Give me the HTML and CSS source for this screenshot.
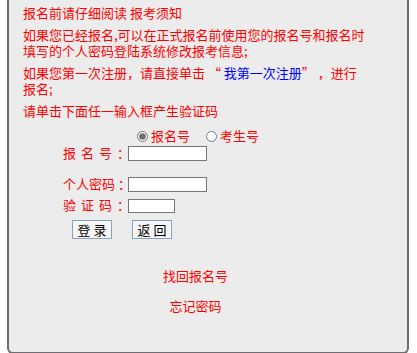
FILE: index.html
```html
<!DOCTYPE html>
<html lang="zh-CN">
<head>
  <meta charset="UTF-8" />
  <meta name="viewport" content="width=device-width, initial-scale=1.0"/>
  <title>考生登录</title>
  <link rel="stylesheet" href="styles.css">
</head>
<body>

  <div class="panel">
    <div class="content">
      <div class="notice">
        <p>报名前请仔细阅读 报考须知</p>
        <p>如果您已经报名,可以在正式报名前使用您的报名号和报名时填写的个人密码登陆系统修改报考信息;</p>
        <p>如果您第一次注册，请直接单击 “ <a href="#" class="blue">我第一次注册</a>” ，进行报名;</p>
        <p>请单击下面任一输入框产生验证码</p>
      </div>

      <form class="login" onsubmit="return false">
        <div class="radios">
          <label><input type="radio" name="kind" checked>报名号</label>
          <label><input type="radio" name="kind">考生号</label>
        </div>
        <div class="row r1">
          <span class="lbl"><span class="wide">报名号</span>：</span>
          <input type="text" class="field">
        </div>
        <div class="row r2">
          <span class="lbl">个人密码&nbsp;：</span>
          <input type="password" class="field">
        </div>
        <div class="row r3">
          <span class="lbl"><span class="wide">验证码</span>：</span>
          <input type="text" class="field short">
        </div>
        <div class="buttons">
          <button type="submit">登 录</button>
          <button type="button">返 回</button>
        </div>
      </form>

      <div class="links">
        <a href="#">找回报名号</a>
        <a href="#">忘记密码</a>
      </div>
    </div>
  </div>

</body>
</html>
```

FILE: styles.css
```css
* {
  box-sizing: border-box;
}

body {
  margin: 0;
  background: #ffffff;
  font-family: "Noto Sans CJK SC", "Liberation Sans", sans-serif;
  font-size: 13px;
  color: #ff0000;
}

.panel {
  margin: 0 8px 0 7px;
  height: 354px;
  background: #ececec;
  border: 2px solid #6b6e72;
  border-top: none;
  border-radius: 0 0 6px 6px;
}

.content {
  width: 345px;
  margin-left: 14px;
  padding-top: 5px;
}

.notice p {
  margin: 0 0 6px;
  line-height: 16px;
}

a {
  color: #ff0000;
  text-decoration: none;
}

a.blue {
  color: #0000ff;
}

.login {
  margin: 0;
}

.radios {
  display: flex;
  gap: 14px;
  padding-left: 112px;
  margin-top: 9px;
  line-height: 16px;
}

.radios label {
  display: flex;
  align-items: center;
}

.radios input {
  width: 11px;
  height: 11px;
  margin: 0 3px 0 2px;
  accent-color: #6d6d6d;
}

.row {
  display: flex;
  align-items: flex-end;
  padding-left: 40px;
  line-height: 16px;
}

.r1 {
  margin-top: 1px;
}

.r2 {
  margin-top: 15px;
}

.r3 {
  margin-top: 5px;
}

.lbl {
  width: 65px;
  white-space: nowrap;
}

.wide {
  letter-spacing: 5px;
}

.field {
  width: 79px;
  height: 15px;
  margin: 0;
  padding: 0 2px;
  border: 1px solid #767676;
  background: #ffffff;
  font-size: 12px;
}

.field.short {
  width: 47px;
  height: 14px;
}

.buttons {
  display: flex;
  gap: 20px;
  padding-left: 49px;
  margin-top: 7px;
}

.buttons button {
  width: 40px;
  height: 19px;
  padding: 0;
  border: 1px solid #8aa2c0;
  border-radius: 0;
  background: #f6f6f6;
  color: #000000;
  font-family: "Noto Sans CJK SC", sans-serif;
  font-size: 13px;
  line-height: 17px;
}

.links {
  display: flex;
  flex-direction: column;
  align-items: center;
  gap: 14px;
  margin-top: 29px;
  line-height: 16px;
}
```
